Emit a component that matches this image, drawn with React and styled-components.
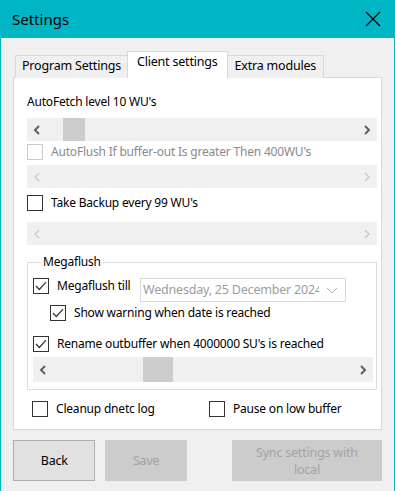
import React from 'react';
import styled, { createGlobalStyle, css } from 'styled-components';

const GlobalStyle = createGlobalStyle`
  html, body {
    margin: 0;
    padding: 0;
    background: #f0f0f0;
  }
  * { box-sizing: border-box; }
`;

const Window = styled.div`
  width: 395px;
  height: 491px;
  background: #f0f0f0;
  border-left: 1px solid #00b5c4;
  border-right: 1px solid #00b5c4;
  font: 400 12px/16px 'Noto Sans', 'Open Sans', sans-serif;
  letter-spacing: -0.2px;
  color: #000;
  overflow: hidden;
`;

const TitleBar = styled.div`
  height: 38px;
  background: #00b5c4;
  display: flex;
  align-items: center;
  justify-content: space-between;
  padding: 0 13px 0 11px;
  font-size: 15px;
  letter-spacing: 0;
`;

const CloseIcon = () => (
  <svg width="16" height="16" viewBox="0 0 16 16">
    <path d="M1 1 L15 15 M15 1 L1 15" stroke="#000" strokeWidth="1.1" fill="none" />
  </svg>
);

const Body = styled.div`
  padding: 14px 12px 0 12px;
`;

const TabStrip = styled.div`
  display: flex;
  align-items: flex-end;
  height: 26px;
  padding-left: 2px;
  position: relative;
  z-index: 1;
`;

const Tab = styled.div`
  height: ${p => (p.$active ? 27 : 23)}px;
  padding: ${p => (p.$active ? '2px 9px 0' : `2px ${p.$px || 6}px 0`)};
  border: 1px solid #d9d9d9;
  border-bottom: none;
  background: ${p => (p.$active ? '#fff' : '#f0f0f0')};
  margin-left: ${p => (p.$active ? -1 : 0)}px;
  margin-right: ${p => (p.$active ? -1 : 0)}px;
  ${p => p.$active && css`z-index: 2;`}
  white-space: nowrap;
  font-size: 12.5px;
`;

const Panel = styled.div`
  height: 353px;
  margin-top: -1px;
  background: #fff;
  border: 1px solid #d9d9d9;
  padding: 0 0 0 13px;
  display: flex;
  flex-direction: column;
`;

const Label = styled.div`
  margin-top: ${p => p.$mt || 0}px;
  height: 16px;
  white-space: nowrap;
`;

const Bar = styled.div`
  margin-top: ${p => p.$mt || 0}px;
  width: ${p => p.$w}px;
  height: ${p => p.$h || 23}px;
  background: #f0f0f0;
  display: flex;
  align-items: center;
  justify-content: space-between;
  padding: 0 6px;
  position: relative;
`;

const Thumb = styled.div`
  position: absolute;
  top: 0;
  bottom: 0;
  background: #cdcdcd;
`;

const Chevron = ({ dir, disabled }) => (
  <svg width="8" height="10" viewBox="0 0 8 10">
    <path
      d={dir === 'left' ? 'M6 1 L2 5 L6 9' : 'M2 1 L6 5 L2 9'}
      stroke={disabled ? '#c6c6c6' : '#606060'}
      strokeWidth={disabled ? 1.2 : 2}
      fill="none"
    />
  </svg>
);

const ScrollBar = ({ mt, w, h, thumbLeft, thumbWidth, disabled }) => (
  <Bar $mt={mt} $w={w} $h={h}>
    <Chevron dir="left" disabled={disabled} />
    {thumbWidth ? <Thumb style={{ left: thumbLeft, width: thumbWidth }} /> : null}
    <Chevron dir="right" disabled={disabled} />
  </Bar>
);

const CheckRow = styled.label`
  display: flex;
  align-items: flex-start;
  gap: 8px;
  margin-top: ${p => p.$mt || 0}px;
  margin-left: ${p => p.$ml || 0}px;
  color: ${p => (p.$disabled ? '#8a8a8a' : '#000')};
  white-space: nowrap;
  line-height: 16px;
`;

const Box = styled.span`
  width: 16px;
  height: 16px;
  flex: none;
  border: 1px solid ${p => (p.$disabled ? '#cccccc' : '#333')};
  background: #fff;
  display: flex;
  align-items: center;
  justify-content: center;
`;

const CheckMark = () => (
  <svg width="12" height="10" viewBox="0 0 12 10">
    <path d="M1 5 L4.3 8.5 L11 1.2" stroke="#333" strokeWidth="1.2" fill="none" />
  </svg>
);

const CheckBox = ({ checked, disabled, children, mt, ml }) => (
  <CheckRow $mt={mt} $ml={ml} $disabled={disabled}>
    <Box $disabled={disabled}>{checked && <CheckMark />}</Box>
    <span>{children}</span>
  </CheckRow>
);

const Group = styled.fieldset`
  margin: 9px 0 0 0;
  width: 350px;
  padding: 0 0 7px 5px;
  border: 1px solid #dcdcdc;
  min-width: 0;
`;

const Legend = styled.legend`
  margin-left: 8px;
  padding: 0 2px;
  line-height: 16px;
`;

const DateRow = styled.div`
  display: flex;
  align-items: flex-start;
  margin-top: 8px;
`;

const DatePicker = styled.div`
  margin-left: auto;
  margin-right: 30px;
  width: 206px;
  height: 24px;
  border: 1px solid #d9d9d9;
  background: #fff;
  color: #9d9d9d;
  display: flex;
  align-items: center;
  padding-left: 2px;
  white-space: nowrap;
  font-size: 12.5px;
`;

const DateText = styled.span`
  flex: 1;
  overflow: hidden;
`;

const DropArrow = () => (
  <svg width="26" height="10" viewBox="0 0 26 10">
    <path d="M8 3 L13 8 L18 3" stroke="#b0b0b0" strokeWidth="1" fill="none" />
  </svg>
);

const BottomRow = styled.div`
  display: grid;
  grid-template-columns: 177px auto;
  margin-top: 11px;
  padding-left: 5px;
`;

const ButtonRow = styled.div`
  display: flex;
  margin-top: 10px;
  height: 41px;
`;

const Button = styled.div`
  width: ${p => p.$w}px;
  margin-left: ${p => p.$ml || 0}px;
  height: 41px;
  padding: 0 ${p => p.$px || 4}px;
  display: flex;
  align-items: center;
  justify-content: center;
  text-align: center;
  line-height: 17px;
  font-size: 12.5px;
  background: ${p => (p.$disabled ? '#cccccc' : '#e1e1e1')};
  border: 1px solid ${p => (p.$disabled ? '#cccccc' : '#adadad')};
  color: ${p => (p.$disabled ? '#a3a3a3' : '#000')};
`;

export default function App() {
  return (
    <>
      <GlobalStyle />
      <Window>
        <TitleBar>
          <span>Settings</span>
          <CloseIcon />
        </TitleBar>
        <Body>
          <TabStrip>
            <Tab>Program Settings</Tab>
            <Tab $active>Client settings</Tab>
            <Tab $px={7}>Extra modules</Tab>
          </TabStrip>
          <Panel>
            <Label $mt={16}>AutoFetch level 10 WU's</Label>
            <ScrollBar mt={8} w={350} h={23} thumbLeft={36} thumbWidth={22} />
            <CheckBox mt={3} disabled>
              AutoFlush If buffer-out Is greater Then 400WU's
            </CheckBox>
            <ScrollBar mt={5} w={350} h={23} disabled />
            <CheckBox mt={7}>Take Backup every 99 WU's</CheckBox>
            <ScrollBar mt={11} w={350} h={23} disabled />
            <Group>
              <Legend>Megaflush</Legend>
              <DateRow>
                <CheckBox checked>Megaflush till</CheckBox>
                <DatePicker>
                  <DateText>Wednesday, 25 December 2024</DateText>
                  <DropArrow />
                </DatePicker>
              </DateRow>
              <CheckBox checked mt={3} ml={17}>
                Show warning when date is reached
              </CheckBox>
              <CheckBox checked mt={15}>
                Rename outbuffer when 4000000 SU's is reached
              </CheckBox>
              <ScrollBar mt={5} w={340} h={25} thumbLeft={110} thumbWidth={30} />
            </Group>
            <BottomRow>
              <CheckBox>Cleanup dnetc log</CheckBox>
              <CheckBox>Pause on low buffer</CheckBox>
            </BottomRow>
          </Panel>
          <ButtonRow>
            <Button $w={83}>Back</Button>
            <Button $w={82} $ml={10} $disabled>Save</Button>
            <Button $w={151} $ml={45} $px={17} $disabled>Sync settings with local</Button>
          </ButtonRow>
        </Body>
      </Window>
    </>
  );
}
